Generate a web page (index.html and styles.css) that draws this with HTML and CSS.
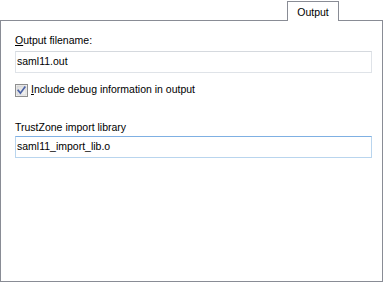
FILE: index.html
```html
<!DOCTYPE html>
<html>
<head>
<meta charset="utf-8">
<link rel="stylesheet" href="styles.css">
</head>
<body>
<div class="tabs">
  <div class="tab">Output</div>
</div>
<div class="panel">
  <label class="label label-first" for="fn"><u>O</u>utput filename:</label>
  <input class="textbox" id="fn" type="text" value="saml11.out">
  <div class="check-row">
    <span class="checkbox">
      <svg width="13" height="13" viewBox="0 0 13 13">
        <defs>
          <linearGradient id="cbg" x1="0" y1="0" x2="1" y2="1">
            <stop offset="0" stop-color="#dcdcdc"/>
            <stop offset="1" stop-color="#f6f6f6"/>
          </linearGradient>
        </defs>
        <rect x="0.5" y="0.5" width="12" height="12" fill="#f4f4f4" stroke="#8f8f8f"/>
        <rect x="2" y="2" width="9" height="9" fill="url(#cbg)" stroke="#c9c9c9" stroke-width="0.6"/>
        <path d="M3.2 6.4 L5.4 9.2 L9.8 3.2" fill="none" stroke="#4b62a6" stroke-width="1.7" stroke-linecap="square"/>
      </svg>
    </span>
    <span class="check-label"><u>I</u>nclude debug information in output</span>
  </div>
  <label class="label label-second" for="tz">TrustZone import library</label>
  <input class="textbox textbox-focus" id="tz" type="text" value="saml11_import_lib.o">
</div>
</body>
</html>
```
FILE: styles.css
```css
html, body {
  margin: 0;
  padding: 0;
  background: #ffffff;
}
body {
  width: 383px;
  height: 282px;
  font-family: "Liberation Sans", Arial, sans-serif;
  font-size: 10.5px;
  line-height: 13px;
  color: #000000;
}
.tabs {
  display: flex;
  justify-content: flex-end;
  padding-top: 1px;
  padding-right: 44px;
  height: 19px;
}
.tab {
  position: relative;
  z-index: 1;
  box-sizing: border-box;
  width: 52px;
  height: 20px;
  border: 1px solid #898c95;
  border-bottom: none;
  background: #ffffff;
  text-align: center;
  padding-top: 4px;
}
.panel {
  box-sizing: border-box;
  width: 383px;
  height: 262px;
  border: 1px solid #898c95;
  padding: 13px 10px 0 14px;
  display: flex;
  flex-direction: column;
  align-items: flex-start;
}
.label {
  display: block;
  height: 13px;
}
.label-first {
  margin-bottom: 4px;
}
.label-second {
  margin-top: 24px;
  margin-bottom: 2px;
}
.textbox {
  box-sizing: border-box;
  width: 357px;
  height: 22px;
  margin: 0;
  padding: 0 1px 3px 1px;
  border: 1px solid #dfe3e8;
  border-top-color: #d5d9de;
  background: #ffffff;
  font-family: inherit;
  font-size: 10.5px;
  color: #000000;
  outline: none;
}
.textbox-focus {
  border-color: #b9d5ee;
  border-top-color: #7fb0e3;
}
.check-row {
  display: flex;
  align-items: flex-start;
  margin-top: 11px;
  height: 13px;
}
.checkbox {
  display: block;
  width: 13px;
  height: 13px;
}
.checkbox svg {
  display: block;
}
.check-label {
  margin-left: 3px;
  margin-top: -1px;
}
u {
  text-decoration: underline;
  text-underline-offset: 1px;
}
```
